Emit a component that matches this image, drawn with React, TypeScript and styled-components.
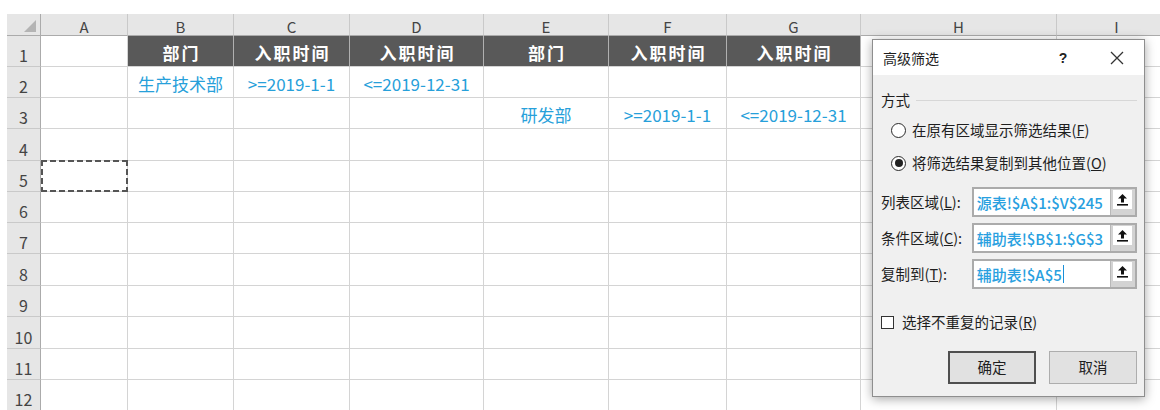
import React from 'react';
import styled, { createGlobalStyle, css } from 'styled-components';

const FONT = `"Noto Sans CJK SC", "Noto Sans", "Liberation Sans", sans-serif`;

const GlobalStyle = createGlobalStyle`
  html, body { margin: 0; padding: 0; background: #fff; }
  body { font-family: ${FONT}; }
  *, *::before, *::after { box-sizing: border-box; }
`;

const COLS = [34, 87, 106, 116, 134, 125, 118, 134, 196, 120];
const ROW_H = [31, 31, 31, 32, 31, 31, 31, 32, 31, 32, 31, 31];
const LETTERS = ['A', 'B', 'C', 'D', 'E', 'F', 'G', 'H', 'I'];

type Kind = 'plain' | 'head' | 'blue';
type CellData = { t?: string; k?: Kind };

const H = (t: string): CellData => ({ t, k: 'head' });
const B = (t: string): CellData => ({ t, k: 'blue' });
const E: CellData = {};

const DATA: CellData[][] = [
  [E, H('部门'), H('入职时间'), H('入职时间'), H('部门'), H('入职时间'), H('入职时间'), E, E],
  [E, B('生产技术部'), B('>=2019-1-1'), B('<=2019-12-31'), E, E, E, E, E],
  [E, E, E, E, B('研发部'), B('>=2019-1-1'), B('<=2019-12-31'), E, E],
];

const Page = styled.div`
  position: relative;
  width: 1160px;
  height: 410px;
  overflow: hidden;
  padding: 14px 0 0 7px;
  background: #fff;
`;

const Sheet = styled.div`
  display: grid;
  grid-template-columns: ${COLS.map((c) => `${c}px`).join(' ')};
  grid-template-rows: 22px ${ROW_H.map((r) => `${r}px`).join(' ')};
`;

const Corner = styled.div`
  position: relative;
  background: #e6e6e6;
  border-right: 1px solid #ababab;
  border-bottom: 1px solid #ababab;
  &::after {
    content: '';
    position: absolute;
    right: 4px;
    bottom: 3px;
    width: 0;
    height: 0;
    border-left: 12px solid transparent;
    border-bottom: 12px solid #b4b4b4;
  }
`;

const ColHeader = styled.div`
  display: flex;
  align-items: center;
  justify-content: center;
  padding-top: 3px;
  background: #e6e6e6;
  border-right: 1px solid #c9c9c9;
  border-bottom: 1px solid #ababab;
  font-size: 15px;
  line-height: 1;
  color: #444;
`;

const RowHeader = styled.div`
  display: flex;
  align-items: flex-end;
  justify-content: center;
  padding-bottom: 3px;
  background: #e6e6e6;
  border-right: 1px solid #ababab;
  border-bottom: 1px solid #c9c9c9;
  font-size: 16px;
  line-height: 1;
  color: #444;
`;

const Cell = styled.div<{ $kind: Kind; $marquee?: boolean }>`
  position: relative;
  display: flex;
  align-items: center;
  justify-content: center;
  white-space: nowrap;
  border-right: 1px solid #d4d4d4;
  border-bottom: 1px solid #d4d4d4;
  font-size: 17px;
  line-height: 1;
  padding-top: 2px;
  ${({ $kind }) =>
    $kind === 'head'
      ? css`
          background: #595959;
          color: #fff;
          font-weight: 700;
          letter-spacing: 2px;
          padding-left: 2px;
          border-right-color: #b0b0b0;
        `
      : $kind === 'blue'
      ? css`
          color: #27a0da;
        `
      : css`
          color: #222;
        `}
  ${({ $marquee }) =>
    $marquee &&
    css`
      &::after {
        content: '';
        position: absolute;
        top: -1px;
        left: 0;
        right: -1px;
        bottom: -1px;
        background:
          repeating-linear-gradient(90deg, #555 0 6px, transparent 6px 9px) top left / 100% 2px no-repeat,
          repeating-linear-gradient(90deg, #555 0 6px, transparent 6px 9px) bottom left / 100% 2px no-repeat,
          repeating-linear-gradient(180deg, #555 0 6px, transparent 6px 9px) top left / 2px 100% no-repeat,
          repeating-linear-gradient(180deg, #555 0 6px, transparent 6px 9px) top right / 2px 100% no-repeat;
      }
    `}
`;

/* ---------- Dialog ---------- */

const Dialog = styled.div`
  position: absolute;
  left: 872px;
  top: 39px;
  width: 273px;
  height: 358px;
  display: flex;
  flex-direction: column;
  border: 1px solid #8e8e8e;
  background: #f0f0f0;
  box-shadow: 0 2px 10px rgba(0, 0, 0, 0.35);
  color: #1e1e1e;
`;

const TitleBar = styled.div`
  height: 35px;
  display: flex;
  align-items: center;
  padding-left: 10px;
  background: #fff;
`;

const Title = styled.div`
  flex: 1;
  font-size: 14px;
  line-height: 1;
`;

const HelpMark = styled.div`
  width: 20px;
  text-align: center;
  font-size: 14px;
  font-weight: 700;
  font-family: "Liberation Sans", sans-serif;
  color: #222;
`;

const CloseBtn = styled.div`
  width: 30px;
  height: 20px;
  margin: 0 12px 0 29px;
  display: flex;
  align-items: center;
  justify-content: center;
`;

const Body = styled.div`
  flex: 1;
  display: flex;
  flex-direction: column;
  padding: 0 7px 0 8px;
  font-size: 14.5px;
  line-height: 1;
`;

const GroupHeader = styled.div`
  margin-top: 15px;
  height: 20px;
  display: flex;
  align-items: center;
  gap: 6px;
`;

const GroupLine = styled.div`
  flex: 1;
  height: 1px;
  background: #d7d7d7;
`;

const RadioList = styled.div`
  margin-top: 8px;
  display: flex;
  flex-direction: column;
  gap: 9px;
`;

const RadioRow = styled.div`
  height: 24px;
  margin-left: 10px;
  display: flex;
  align-items: center;
  gap: 6px;
`;

const RadioCircle = styled.span<{ $checked?: boolean }>`
  flex: none;
  width: 15px;
  height: 15px;
  border-radius: 50%;
  border: 1px solid #2b2b2b;
  background: #fff;
  display: inline-flex;
  align-items: center;
  justify-content: center;
  &::after {
    content: '';
    width: 8px;
    height: 8px;
    border-radius: 50%;
    background: ${({ $checked }) => ($checked ? '#222' : 'transparent')};
  }
`;

const FieldList = styled.div`
  margin-top: 12px;
  display: flex;
  flex-direction: column;
  gap: 6px;
`;

const FieldRow = styled.div`
  height: 30px;
  display: flex;
  align-items: center;
`;

const FieldLabel = styled.div`
  width: 91px;
  white-space: nowrap;
`;

const FieldBox = styled.div`
  width: 166px;
  height: 30px;
  display: flex;
  border: 2px solid #ababab;
  background: #fff;
`;

const FieldValue = styled.div`
  flex: 1;
  display: flex;
  align-items: center;
  padding-left: 3px;
  font-size: 15px;
  font-weight: 500;
  color: #28a0e0;
  white-space: nowrap;
`;

const Caret = styled.span`
  display: inline-block;
  width: 1px;
  height: 18px;
  margin-left: 1px;
  background: #1a8fd8;
`;

const RefButton = styled.div`
  width: 25px;
  background: #d3d3d3;
  border-left: 1px solid #b8b8b8;
  padding: 1px 3px 6px 2px;
`;

const RefFace = styled.div`
  height: 100%;
  background: #fff;
  display: flex;
  align-items: center;
  justify-content: center;
`;

const CheckRow = styled.div`
  margin-top: 23px;
  height: 20px;
  display: flex;
  align-items: center;
  gap: 8px;
`;

const CheckBox = styled.span`
  flex: none;
  width: 13px;
  height: 13px;
  border: 1px solid #333;
  background: #fff;
`;

const ButtonRow = styled.div`
  margin-top: 19px;
  display: flex;
  justify-content: flex-end;
  gap: 13px;
`;

const DialogButton = styled.div<{ $primary?: boolean }>`
  width: 88px;
  height: 33px;
  display: flex;
  align-items: center;
  justify-content: center;
  background: #e1e1e1;
  border: ${({ $primary }) => ($primary ? '2px solid #4f4f4f' : '1px solid #adadad')};
  font-size: 14.5px;
`;

const RefIcon = () => (
  <svg width="11" height="12" viewBox="0 0 11 12">
    <path d="M5.5 0 L10 4.5 H7 V8.5 H4 V4.5 H1 Z" fill="#111" />
    <rect x="0" y="10" width="11" height="1.6" fill="#111" />
  </svg>
);

const CloseIcon = () => (
  <svg width="14" height="14" viewBox="0 0 14 14">
    <path d="M1 1 L13 13 M13 1 L1 13" stroke="#333" strokeWidth="1.3" />
  </svg>
);

const fields: { label: string; key: string; value: string; caret?: boolean }[] = [
  { label: '列表区域(', key: 'L', value: '源表!$A$1:$V$245' },
  { label: '条件区域(', key: 'C', value: '辅助表!$B$1:$G$3' },
  { label: '复制到(', key: 'T', value: '辅助表!$A$5', caret: true },
];

export default function App() {
  return (
    <>
      <GlobalStyle />
      <Page>
        <Sheet>
          <Corner />
          {LETTERS.map((l) => (
            <ColHeader key={l}>{l}</ColHeader>
          ))}
          {ROW_H.map((_, r) => (
            <React.Fragment key={r}>
              <RowHeader>{r + 1}</RowHeader>
              {LETTERS.map((l, c) => {
                const d = DATA[r]?.[c] ?? E;
                return (
                  <Cell key={l} $kind={d.k ?? 'plain'} $marquee={r === 4 && c === 0}>
                    {d.t}
                  </Cell>
                );
              })}
            </React.Fragment>
          ))}
        </Sheet>

        <Dialog>
          <TitleBar>
            <Title>高级筛选</Title>
            <HelpMark>?</HelpMark>
            <CloseBtn>
              <CloseIcon />
            </CloseBtn>
          </TitleBar>
          <Body>
            <GroupHeader>
              <span>方式</span>
              <GroupLine />
            </GroupHeader>
            <RadioList>
              <RadioRow>
                <RadioCircle />
                <span>
                  在原有区域显示筛选结果(<u>F</u>)
                </span>
              </RadioRow>
              <RadioRow>
                <RadioCircle $checked />
                <span>
                  将筛选结果复制到其他位置(<u>O</u>)
                </span>
              </RadioRow>
            </RadioList>
            <FieldList>
              {fields.map((f) => (
                <FieldRow key={f.key}>
                  <FieldLabel>
                    {f.label}
                    <u>{f.key}</u>):
                  </FieldLabel>
                  <FieldBox>
                    <FieldValue>
                      {f.value}
                      {f.caret && <Caret />}
                    </FieldValue>
                    <RefButton>
                      <RefFace>
                        <RefIcon />
                      </RefFace>
                    </RefButton>
                  </FieldBox>
                </FieldRow>
              ))}
            </FieldList>
            <CheckRow>
              <CheckBox />
              <span>
                选择不重复的记录(<u>R</u>)
              </span>
            </CheckRow>
            <ButtonRow>
              <DialogButton $primary>确定</DialogButton>
              <DialogButton>取消</DialogButton>
            </ButtonRow>
          </Body>
        </Dialog>
      </Page>
    </>
  );
}
